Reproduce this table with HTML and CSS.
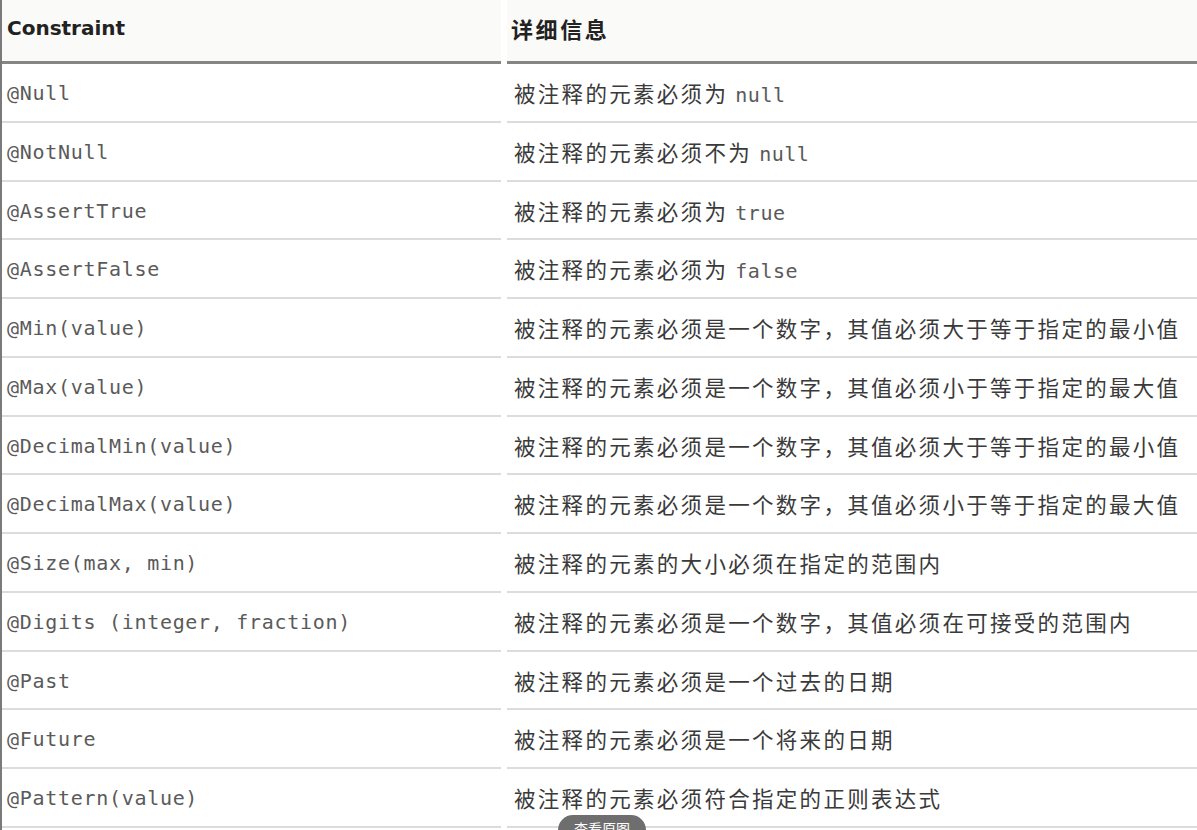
FILE: index.html
```html
<!DOCTYPE html>
<html lang="zh-CN">
<head>
<meta charset="utf-8">
<title>Bean Validation Constraints</title>
<link rel="stylesheet" href="styles.css">
</head>
<body>
<div class="sheet">
  <div class="grid">
    <div class="hcell hleft">Constraint</div>
    <div class="hcell hright">详细信息</div>

    <div class="cell left"><code>@Null</code></div>
    <div class="cell right">被注释的元素必须为 <code>null</code></div>

    <div class="cell left"><code>@NotNull</code></div>
    <div class="cell right">被注释的元素必须不为 <code>null</code></div>

    <div class="cell left"><code>@AssertTrue</code></div>
    <div class="cell right">被注释的元素必须为 <code>true</code></div>

    <div class="cell left"><code>@AssertFalse</code></div>
    <div class="cell right">被注释的元素必须为 <code>false</code></div>

    <div class="cell left"><code>@Min(value)</code></div>
    <div class="cell right">被注释的元素必须是一个数字，其值必须大于等于指定的最小值</div>

    <div class="cell left"><code>@Max(value)</code></div>
    <div class="cell right">被注释的元素必须是一个数字，其值必须小于等于指定的最大值</div>

    <div class="cell left"><code>@DecimalMin(value)</code></div>
    <div class="cell right">被注释的元素必须是一个数字，其值必须大于等于指定的最小值</div>

    <div class="cell left"><code>@DecimalMax(value)</code></div>
    <div class="cell right">被注释的元素必须是一个数字，其值必须小于等于指定的最大值</div>

    <div class="cell left"><code>@Size(max, min)</code></div>
    <div class="cell right">被注释的元素的大小必须在指定的范围内</div>

    <div class="cell left"><code>@Digits (integer, fraction)</code></div>
    <div class="cell right">被注释的元素必须是一个数字，其值必须在可接受的范围内</div>

    <div class="cell left"><code>@Past</code></div>
    <div class="cell right">被注释的元素必须是一个过去的日期</div>

    <div class="cell left"><code>@Future</code></div>
    <div class="cell right">被注释的元素必须是一个将来的日期</div>

    <div class="cell left"><code>@Pattern(value)</code></div>
    <div class="cell right">被注释的元素必须符合指定的正则表达式</div>
  </div>
  <div class="tip">查看原图</div>
</div>
</body>
</html>
```

FILE: styles.css
```css
html, body {
  margin: 0;
  padding: 0;
  background: #ffffff;
  height: 100%;
  overflow: hidden;
}

.sheet {
  position: relative;
  height: 830px;
  border-left: 2px solid #7a7a7a;
  box-sizing: border-box;
}

.grid {
  display: grid;
  grid-template-columns: 499px 1fr;
  column-gap: 6px;
}

.hcell {
  height: 64px;
  box-sizing: border-box;
  background: #fafaf8;
  border-bottom: 3px solid #858585;
  line-height: 56px;
  color: #222;
  font-weight: bold;
  white-space: nowrap;
}

.hleft {
  padding-left: 5px;
  font-family: "DejaVu Sans", sans-serif;
  font-size: 20px;
}

.hright {
  padding-left: 4px;
  font-family: "Noto Sans CJK SC", sans-serif;
  font-size: 22px;
  letter-spacing: 2.6px;
}

.cell {
  height: 58.75px;
  box-sizing: border-box;
  border-bottom: 2px solid #dcdcdc;
  line-height: 58px;
  white-space: nowrap;
}

.left {
  padding-left: 5px;
}

.right {
  padding-left: 7px;
  font-family: "Noto Sans CJK SC", sans-serif;
  font-size: 21.5px;
  letter-spacing: 2.3px;
  color: #3a3a3a;
}

code {
  font-family: "DejaVu Sans Mono", monospace;
  font-size: 20px;
  letter-spacing: 0.7px;
  color: #5a5a5a;
}

.right code {
  letter-spacing: 0.5px;
}

.tip {
  position: absolute;
  left: 556px;
  top: 815px;
  width: 88px;
  height: 30px;
  border-radius: 15px;
  background: #6e6e6e;
  color: #ffffff;
  font-family: "Noto Sans CJK SC", sans-serif;
  font-size: 14px;
  line-height: 14px;
  padding-top: 6px;
  box-sizing: border-box;
  text-align: center;
}
```
